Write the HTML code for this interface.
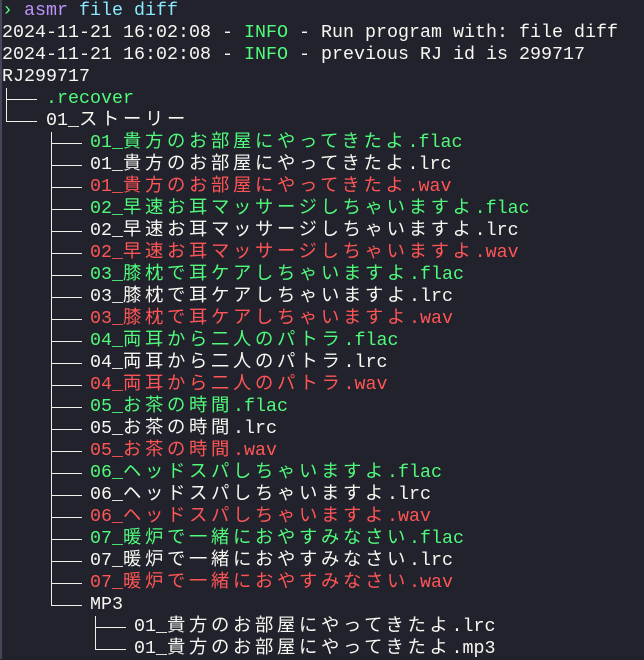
<!DOCTYPE html>
<html><head><meta charset="utf-8"><style>
body{margin:0;background:#21222c;width:644px;height:658px;overflow:hidden;font-family:"Liberation Mono","Noto Sans CJK JP",monospace;font-size:18.33px;color:#f8f8f2}
.w{position:absolute;left:0;top:-1px;border-left:2px solid #44475a;height:660px}
.r{position:relative;height:22px;line-height:22px;white-space:pre;padding-left:2px}
.j{letter-spacing:3.67px}
.g{color:#50fa7b}.x{color:#ff5555}.p{color:#bd93f9}.c{color:#8be9fd}
.v{position:absolute;top:0;width:1px;height:22px;background:#f0f0ea}
.h{position:absolute;top:11px;height:1px;width:31px;background:#f0f0ea}
.e{height:12px}
</style></head><body><div class="w"></div>
<div class="r"><span class="g">›</span> <span class="p">asmr</span> <span class="c">file diff</span></div>
<div class="r">2024-11-21 16:02:08 - <span class="g">INFO</span> - Run program with: file diff</div>
<div class="r">2024-11-21 16:02:08 - <span class="g">INFO</span> - previous RJ id is 299717</div>
<div class="r">RJ299717</div>
<div class="r" style="padding-left:46px"><i class="v" style="left:6px"></i><i class="h" style="left:6px"></i><span class="g">.recover</span></div>
<div class="r" style="padding-left:46px"><i class="v e" style="left:6px"></i><i class="h" style="left:6px"></i>01_<span class="j">ストーリー</span></div>
<div id="t"></div>
<script>
var L=[["01_","貴方のお部屋にやってきたよ"],["02_","早速お耳マッサージしちゃいますよ"],["03_","膝枕で耳ケアしちゃいますよ"],["04_","両耳から二人のパトラ"],["05_","お茶の時間"],["06_","ヘッドスパしちゃいますよ"],["07_","暖炉で一緒におやすみなさい"]];
var h="";
L.forEach(function(a){[["g",".flac"],["",".lrc"],["x",".wav"]].forEach(function(b){
h+='<div class="r" style="padding-left:90px"><i class="v" style="left:51px"></i><i class="h" style="left:51px"></i><span class="'+b[0]+'">'+a[0]+'<span class="j">'+a[1]+'</span>'+b[1]+'</span></div>';});});
h+='<div class="r" style="padding-left:90px"><i class="v e" style="left:51px"></i><i class="h" style="left:51px"></i>MP3</div>';
["lrc","mp3"].forEach(function(e,i){h+='<div class="r" style="padding-left:134px"><i class="v'+(i?' e':'')+'" style="left:95px"></i><i class="h" style="left:95px"></i>01_<span class="j">貴方のお部屋にやってきたよ</span>.'+e+'</div>';});
document.getElementById("t").outerHTML=h;
</script>
</body></html>
